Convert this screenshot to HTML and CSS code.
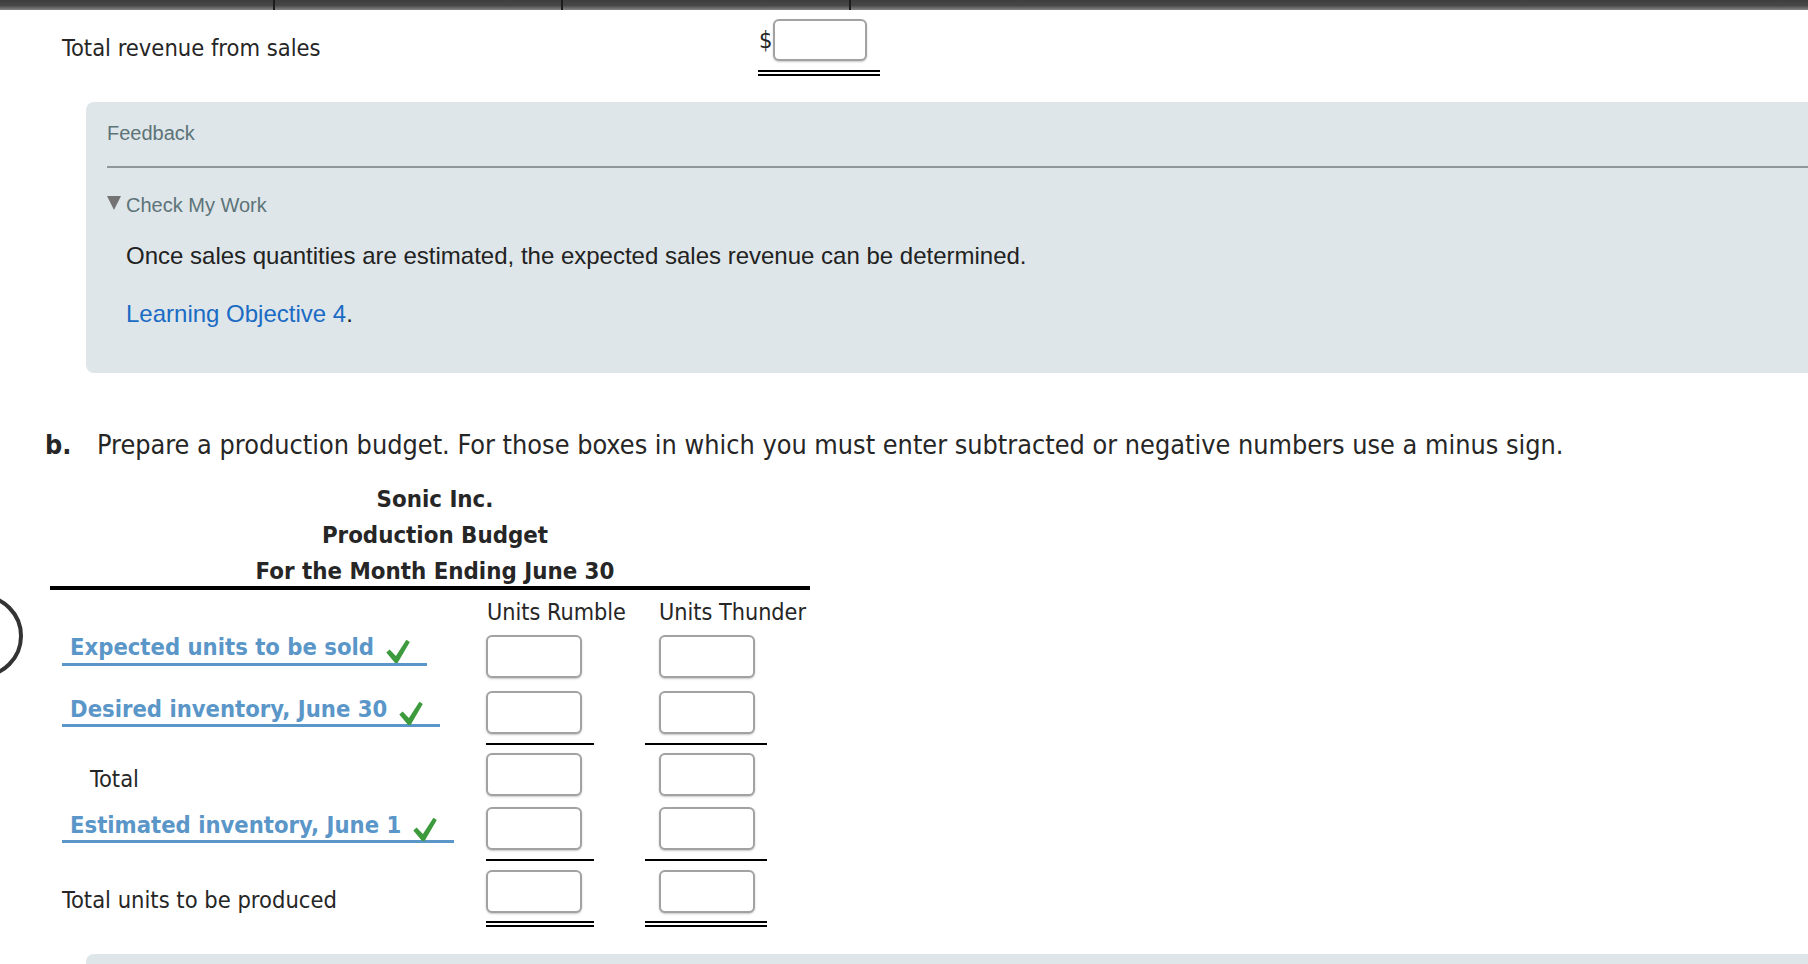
FILE: index.html
```html
<!DOCTYPE html>
<html>
<head>
<meta charset="utf-8">
<title>Production Budget</title>
<link rel="stylesheet" href="styles.css">
</head>
<body>
<div class="topbar"><div class="seg seg1"></div><div class="seg"></div><div class="seg"></div><div class="seg last"></div></div>

<div class="rev-row">
  <div class="rev-label">Total revenue from sales</div>
  <div class="amt-cell"><span class="dollar">$</span><input class="inbox rev-box" type="text"></div>
</div>

<div class="feedback">
  <div class="fb-title">Feedback</div>
  <div class="fb-sep"></div>
  <div class="cmw"><svg class="tri" width="14" height="14" viewBox="0 0 14 14"><path d="M0 0H14L7 14Z" fill="#737373"/></svg>Check My Work</div>
  <p class="fb-text">Once sales quantities are estimated, the expected sales revenue can be determined.</p>
  <p class="fb-text fb-link"><a class="lo">Learning Objective 4</a>.</p>
</div>

<div class="part-b">
  <div class="instr"><b class="letter">b.</b>Prepare a production budget. For those boxes in which you must enter subtracted or negative numbers use a minus sign.</div>
  <div class="budget">
    <div class="bhead"><div>Sonic Inc.</div><div>Production Budget</div><div>For the Month Ending June 30</div></div>
    <div class="bgrid">
      <div></div>
      <div class="colh c1">Units Rumble</div>
      <div class="colh c2">Units Thunder</div>

      <div class="lab r1"><span class="lab-u h29">Expected units to be sold<svg class="chk" viewBox="0 0 24 24"><path d="M0.3 13.6L3.6 10.6L9.9 16.9L20.4 0.7L23.8 3.1L11.6 23.9L9.1 23.9Z" fill="#3d9b3d"/></svg></span></div>
      <div class="v c1 r1"><input class="inbox" type="text"></div>
      <div class="v c2 r1"><input class="inbox" type="text"></div>

      <div class="lab r2"><span class="lab-u h28">Desired inventory, June 30<svg class="chk" viewBox="0 0 24 24"><path d="M0.3 13.6L3.6 10.6L9.9 16.9L20.4 0.7L23.8 3.1L11.6 23.9L9.1 23.9Z" fill="#3d9b3d"/></svg></span></div>
      <div class="v c1 r2 single"><input class="inbox" type="text"></div>
      <div class="v c2 r2 single"><input class="inbox" type="text"></div>

      <div class="plain r3">Total</div>
      <div class="v c1 r3"><input class="inbox" type="text"></div>
      <div class="v c2 r3"><input class="inbox" type="text"></div>

      <div class="lab r4"><span class="lab-u h28">Estimated inventory, June 1<svg class="chk" viewBox="0 0 24 24"><path d="M0.3 13.6L3.6 10.6L9.9 16.9L20.4 0.7L23.8 3.1L11.6 23.9L9.1 23.9Z" fill="#3d9b3d"/></svg></span></div>
      <div class="v c1 r4 single"><input class="inbox" type="text"></div>
      <div class="v c2 r4 single"><input class="inbox" type="text"></div>

      <div class="plain r5">Total units to be produced</div>
      <div class="v c1 r5 double"><input class="inbox" type="text"></div>
      <div class="v c2 r5 double"><input class="inbox" type="text"></div>
    </div>
  </div>
</div>

<div class="feedback bottom"></div>
<div class="ring"></div>
</body>
</html>
```
FILE: styles.css
```css
html, body {
  margin: 0;
  padding: 0;
  overflow: hidden;
}
body {
  width: 1808px;
  height: 964px;
  position: relative;
  background: #ffffff;
  font-family: "DejaVu Sans", Verdana, sans-serif;
  font-stretch: condensed;
  color: #262626;
}

/* top dark strip */
.topbar {
  display: flex;
  height: 10px;
  background: linear-gradient(#3e3e3e, #474747 55%, #858585);
}
.seg {
  width: 286px;
  border-right: 2px solid #1c1c1c;
}
.seg1 { width: 273px; }
.seg.last { flex: 1; border-right: 0; }

/* total revenue row */
.rev-row {
  display: flex;
  align-items: flex-start;
  padding-left: 62px;
}
.rev-label {
  width: 696px;
  font-size: 23.5px;
  line-height: 24px;
  padding-top: 26px;
  white-space: nowrap;
}
.amt-cell {
  display: flex;
  align-items: flex-start;
  width: 121px;
  padding: 9px 0 9px 1px;
  border-bottom: 6px double #000;
}
.dollar {
  width: 14px;
  font-size: 23.5px;
  line-height: 24px;
  margin-top: 9px;
}
.inbox {
  display: block;
  box-sizing: border-box;
  width: 96px;
  height: 43px;
  margin: 0;
  padding: 0;
  background: #fff;
  border: 2px solid #a2a2a2;
  border-radius: 6px;
  box-shadow: 0 1px 2px rgba(0, 0, 0, 0.22);
  outline: none;
}
.rev-box { width: 94px; height: 42px; }

/* feedback panel */
.feedback {
  margin: 26px -40px 0 86px;
  padding: 19px 0 45px 21px;
  background: #dfe6e9;
  border-radius: 8px 0 0 8px;
  font-family: "Liberation Sans", Arial, sans-serif;
  font-stretch: normal;
}
.fb-title {
  font-size: 20px;
  line-height: 24px;
  color: #5c7378;
}
.fb-sep {
  margin-top: 21px;
  border-top: 2px solid #8e979a;
}
.cmw {
  margin-top: 25px;
  font-size: 20px;
  line-height: 24px;
  color: #5c7378;
}
.tri {
  vertical-align: 2px;
  margin-right: 5px;
}
.fb-text {
  margin: 25px 0 0 19px;
  font-size: 24px;
  line-height: 28px;
  color: #222;
}
.fb-link { margin-top: 30px; }
.lo { color: #1a6bc4; text-decoration: none; }

/* part b */
.part-b {
  margin-top: 57px;
  padding-left: 45px;
}
.instr {
  font-size: 26.8px;
  line-height: 30px;
  white-space: nowrap;
}
.letter {
  display: inline-block;
  width: 52px;
  font-weight: bold;
}
.budget {
  margin-left: 5px;
  width: 760px;
}
.bhead {
  margin-top: 21px;
  width: 750px;
  height: 105px;
  padding-left: 10px;
  text-align: center;
  font-weight: bold;
  font-size: 23.8px;
  line-height: 36px;
  border-bottom: 4px solid #000;
  white-space: nowrap;
}
.bgrid {
  display: grid;
  grid-template-columns: 436px 159px 165px;
  align-items: start;
}
.colh {
  font-size: 23.2px;
  line-height: 30px;
  padding-top: 7px;
  white-space: nowrap;
}
.colh.c1 { padding-left: 1px; }
.colh.c2 { padding-left: 14px; }

.v {
  width: 108px;
  padding-top: 8px;
  padding-bottom: 5px;
}
.v.c2 { padding-left: 14px; }
.v.r2 { padding-bottom: 9px; }
.v.r3 { padding-bottom: 4px; }
.v.r4 { padding-top: 7px; padding-bottom: 9px; }
.v.r5 { padding-top: 9px; padding-bottom: 8px; }
.single { border-bottom: 2px solid #000; }
.double { border-bottom: 6px double #000; }

.lab {
  display: flex;
  align-items: flex-start;
  padding-left: 12px;
}
.lab.r1 { padding-top: 7px; }
.lab.r2 { padding-top: 13px; }
.lab.r4 { padding-top: 12px; }
.lab-u {
  display: block;
  padding: 0 17px 0 8px;
  font-weight: bold;
  font-size: 23.6px;
  line-height: 26px;
  color: #5a96c8;
  border-bottom: 3px solid #5a96c8;
  white-space: nowrap;
}
.h29 { height: 29px; }
.h28 { height: 28px; }
.chk {
  width: 24px;
  height: 24px;
  margin-left: 12px;
  vertical-align: -8px;
}
.plain {
  font-size: 23.5px;
  line-height: 26px;
  white-space: nowrap;
}
.plain.r3 { padding-top: 21px; padding-left: 40px; }
.plain.r5 { padding-top: 26px; padding-left: 12px; }

.feedback.bottom {
  margin-top: 27px;
  height: 60px;
  padding: 0;
  border-radius: 8px 0 0 0;
}

.ring {
  position: absolute;
  left: -61px;
  top: 594px;
  width: 84px;
  height: 84px;
  box-sizing: border-box;
  border: 4px solid #333;
  border-radius: 50%;
}
```
